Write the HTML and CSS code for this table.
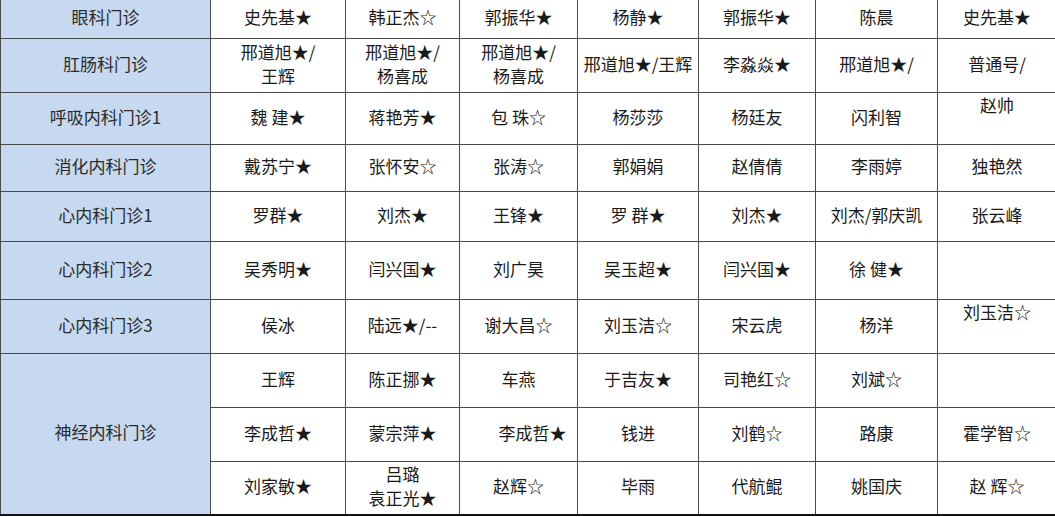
FILE: index.html
```html
<!DOCTYPE html>
<html lang="zh-CN">
<head>
<meta charset="utf-8">
<title>门诊排班表</title>
<link rel="stylesheet" href="styles.css">
</head>
<body>
<table class="schedule">
  <colgroup>
    <col class="c-dept"><col class="c1"><col class="c2"><col class="c3"><col class="c4"><col class="c5"><col class="c6"><col class="c7">
  </colgroup>
  <tbody>
    <tr class="r1">
      <th>眼科门诊</th>
      <td>史先基★</td><td>韩正杰☆</td><td>郭振华★</td><td>杨静★</td><td>郭振华★</td><td>陈晨</td><td>史先基★</td>
    </tr>
    <tr class="r2">
      <th>肛肠科门诊</th>
      <td class="two">邢道旭★/<br>王辉</td><td class="two">邢道旭★/<br>杨喜成</td><td class="two">邢道旭★/<br>杨喜成</td><td>邢道旭★/王辉</td><td>李淼焱★</td><td>邢道旭★/</td><td>普通号/</td>
    </tr>
    <tr class="r3">
      <th>呼吸内科门诊1</th>
      <td>魏 建★</td><td>蒋艳芳★</td><td>包 珠☆</td><td>杨莎莎</td><td>杨廷友</td><td>闪利智</td><td class="top">赵帅</td>
    </tr>
    <tr class="r4">
      <th>消化内科门诊</th>
      <td>戴苏宁★</td><td>张怀安☆</td><td>张涛☆</td><td>郭娟娟</td><td>赵倩倩</td><td>李雨婷</td><td>独艳然</td>
    </tr>
    <tr class="r5">
      <th>心内科门诊1</th>
      <td>罗群★</td><td>刘杰★</td><td>王锋★</td><td>罗 群★</td><td>刘杰★</td><td>刘杰/郭庆凯</td><td>张云峰</td>
    </tr>
    <tr class="r6">
      <th>心内科门诊2</th>
      <td>吴秀明★</td><td>闫兴国★</td><td>刘广昊</td><td>吴玉超★</td><td>闫兴国★</td><td>徐 健★</td><td></td>
    </tr>
    <tr class="r7">
      <th>心内科门诊3</th>
      <td>侯冰</td><td>陆远★/--</td><td>谢大昌☆</td><td>刘玉洁☆</td><td>宋云虎</td><td>杨洋</td><td class="top">刘玉洁☆</td>
    </tr>
    <tr class="r8">
      <th rowspan="3">神经内科门诊</th>
      <td>王辉</td><td>陈正挪★</td><td>车燕</td><td>于吉友★</td><td>司艳红☆</td><td>刘斌☆</td><td></td>
    </tr>
    <tr class="r9">
      <td>李成哲★</td><td>蒙宗萍★</td><td class="shift">李成哲★</td><td>钱进</td><td>刘鹤☆</td><td>路康</td><td>霍学智☆</td>
    </tr>
    <tr class="r10">
      <td>刘家敏★</td><td class="two">吕璐<br>袁正光★</td><td>赵辉☆</td><td>毕雨</td><td>代航鲲</td><td>姚国庆</td><td>赵 辉☆</td>
    </tr>
  </tbody>
</table>
</body>
</html>
```

FILE: styles.css
```css
html, body {
  margin: 0;
  padding: 0;
  background: #ffffff;
  overflow: hidden;
}

.schedule {
  border-collapse: collapse;
  table-layout: fixed;
  width: 1056px;
  margin-top: -2px;
  font-family: "Noto Sans CJK SC", "Noto Sans", sans-serif;
  font-size: 17px;
  line-height: 22px;
  color: #1a1a1a;
}

.c-dept { width: 210px; }
.c1 { width: 135px; }
.c2 { width: 114px; }
.c3 { width: 118px; }
.c4 { width: 121px; }
.c5 { width: 117px; }
.c6 { width: 122px; }
.c7 { width: 119px; }

.schedule th,
.schedule td {
  border: 1px solid #4a4a4a;
  padding: 0 0 4px;
  text-align: center;
  vertical-align: middle;
  white-space: nowrap;
  font-weight: normal;
}

.schedule th {
  background: #c6d9f0;
  color: #2b2b2b;
}

.schedule td.two {
  line-height: 24px;
  padding-bottom: 4px;
}

.schedule td.top {
  vertical-align: top;
  padding-top: 1px;
  padding-bottom: 0;
}

.schedule td.shift {
  padding-left: 28px;
}

.r1 { height: 40px; }
.r2 { height: 54px; }
.r3 { height: 52px; }
.r4 { height: 47px; }
.r5 { height: 50px; }
.r6 { height: 58px; }
.r7 { height: 54px; }
.r8 { height: 54px; }
.r9 { height: 54px; }
.r10 { height: 53px; }

.r10 td,
.r8 th {
  border-bottom: 2px solid #111;
}
```
